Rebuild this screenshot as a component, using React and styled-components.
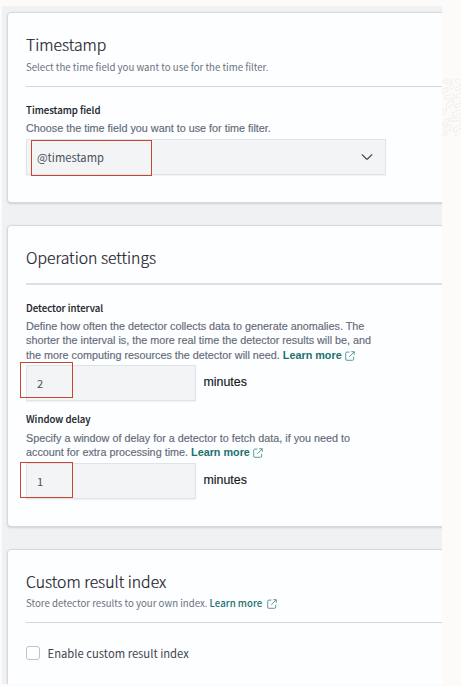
import React from "react";
import styled, { createGlobalStyle } from "styled-components";

const GlobalStyle = createGlobalStyle`
  * { box-sizing: border-box; }
  body { margin: 0; background: #fdfbf9; overflow: hidden; }
`;

const humanist = `"Noto Sans CJK SC", "Open Sans", sans-serif`;
const grotesque = `"Liberation Sans", Arial, sans-serif`;

const Page = styled.main`
  display: flex;
  width: 461px;
  height: 686px;
  padding: 6px 0 2px 2px;
  background: #fdfbf9;
`;

const Content = styled.div`
  display: flex;
  flex-direction: column;
  gap: 22px;
  width: 440px;
  height: 678px;
  padding: 6px 0 0 5px;
  overflow: hidden;
  background: #f0f1f3;
`;

const Margin = styled.aside`
  width: 19px;
  padding-top: 72px;
  svg { display: block; }
`;

const Card = styled.section`
  flex: none;
  width: 450px;
  height: ${(p) => p.$height}px;
  padding: ${(p) => p.$top}px 0 0 18px;
  background: #fdfeff;
  border: 1px solid #d5d8dd;
  border-radius: 4px;
  box-shadow: 0 1px 2px rgba(90, 100, 115, 0.22);
`;

const Title = styled.h2`
  margin: 0;
  font: 300 15.75px/20px ${humanist};
  color: #1c2029;
  -webkit-text-stroke: 0.2px #1c2029;
  white-space: nowrap;
`;

const Subtitle = styled.p`
  margin: ${(p) => p.$gap}px 0 0;
  font: 400 9.67px/14px ${humanist};
  color: #6a717c;
  white-space: nowrap;
`;

const Divider = styled.hr`
  height: ${(p) => p.$weight || 1}px;
  margin: ${(p) => p.$gap}px 0 0;
  border: 0;
  background: ${(p) => (p.$weight ? "#dde0e5" : "#d3d6dc")};
`;

const Label = styled.h3`
  margin: ${(p) => p.$gap}px 0 0;
  font: 500 9.65px/14px ${humanist};
  color: #23262e;
  -webkit-text-stroke: 0.12px #23262e;
  white-space: nowrap;
`;

const Help = styled.p`
  margin: ${(p) => p.$gap}px 0 0;
  font: 400 10.8px/${(p) => p.$line || 14.5}px ${grotesque};
  color: #636a78;
  -webkit-text-stroke: 0.15px #636a78;
  white-space: nowrap;
`;

const Link = styled.a`
  font-weight: ${(p) => p.$weight || 700};
  color: #1b716e;
  -webkit-text-stroke: 0;
  svg { margin-left: ${(p) => p.$space || 3.5}px; vertical-align: -2px; }
`;

const Field = styled.div`
  position: relative;
  display: flex;
  align-items: center;
  justify-content: space-between;
  width: ${(p) => p.$width}px;
  height: 36px;
  padding: 0 12px 0 10px;
  background: #f3f4f6;
  border: 1px solid #e0e3e7;
  box-shadow: 0 1px 1px rgba(100, 110, 130, 0.08);
  font: 400 11.2px/18px ${humanist};
  color: #4a505b;
`;

const Value = styled.span`
  padding-bottom: ${(p) => p.$lift || 0}px;
`;

const Highlight = styled.span`
  position: absolute;
  left: ${(p) => p.$left}px;
  top: ${(p) => p.$top}px;
  width: ${(p) => p.$width}px;
  height: 36px;
  border: 1px solid #c8462f;
`;

const FieldRow = styled.div`
  display: flex;
  align-items: center;
  gap: 7.5px;
  margin-top: ${(p) => p.$gap}px;
`;

const Unit = styled.span`
  padding-bottom: ${(p) => p.$lift}px;
  font: 400 12.4px/16px ${grotesque};
  color: #14171f;
  -webkit-text-stroke: 0.15px #14171f;
`;

const CheckRow = styled.label`
  display: flex;
  align-items: center;
  gap: 7.5px;
  margin-top: 23px;
  font: 400 11.25px/14px ${humanist};
  color: #41464f;
`;

const CheckBox = styled.span`
  width: 14px;
  height: 14px;
  background: #fff;
  border: 1px solid #bfc2c9;
  border-radius: 3px;
`;

const External = () => (
  <svg width="10" height="10" viewBox="0 0 10 10" fill="none" stroke="#4c938d" strokeWidth="0.9">
    <path d="M4.4 1.1H2A1.2 1.2 0 0 0 .7 2.3V8A1.2 1.2 0 0 0 2 9.3H7.4A1.2 1.2 0 0 0 8.7 8V5.8" />
    <path d="M6.2.7H9.3V3.8M9.1.9 4.3 5.8" />
  </svg>
);

const Chevron = () => (
  <svg width="12" height="8" viewBox="0 0 12 8" fill="none" stroke="#3c434f" strokeWidth="1.15">
    <path d="M.8 1.4 5.5 6Q6 6.4 6.5 6L11.2 1.4" />
  </svg>
);

const Pebbles = () => (
  <svg width="19" height="58" viewBox="0 0 19 58" fill="none" stroke="#f0eeee" strokeWidth="1">
    <rect x="1" y="2" width="9" height="3" rx="1.5" />
    <rect x="13" y="1" width="8" height="4" rx="2" transform="rotate(20 15 3)" />
    <rect x="-3" y="11" width="9" height="3.5" rx="1.7" transform="rotate(-30 2 12)" />
    <rect x="8" y="5" width="3" height="6" rx="1.5" transform="rotate(18 9 8)" />
    <rect x="13" y="9" width="8" height="3" rx="1.5" transform="rotate(-24 16 10)" />
    <rect x="3" y="17" width="10" height="4" rx="2" transform="rotate(-8 8 19)" />
    <rect x="14" y="16" width="8" height="4" rx="2" transform="rotate(-28 16 17)" />
    <rect x="4" y="24" width="8" height="4" rx="2" transform="rotate(-38 8 26)" />
    <rect x="13" y="26" width="8" height="3" rx="1.5" transform="rotate(-20 16 27)" />
    <rect x="-1" y="32" width="7" height="3" rx="1.5" transform="rotate(-50 2 34)" />
    <rect x="10" y="33" width="10" height="4" rx="2" transform="rotate(-25 15 35)" />
    <rect x="7" y="40" width="13" height="3" rx="1.5" />
    <rect x="0" y="43" width="8" height="3" rx="1.5" transform="rotate(-55 4 45)" />
    <rect x="1" y="49" width="10" height="3.5" rx="1.7" transform="rotate(-48 6 51)" />
    <rect x="11" y="49" width="10" height="3.5" rx="1.7" transform="rotate(-35 15 51)" />
    <path d="M0 57H5M12 57H15" />
  </svg>
);

export default function App() {
  return (
    <>
      <GlobalStyle />
      <Page>
        <Content>
          <Card $height={191} $top={22}>
            <Title>Timestamp</Title>
            <Subtitle $gap={5}>Select the time field you want to use for the time filter.</Subtitle>
            <Divider $gap={12} />
            <Label $gap={16}>Timestamp field</Label>
            <Help $gap={4}>Choose the time field you want to use for time filter.</Help>
            <FieldRow $gap={3.5}>
              <Field $width={360}>
                <Value $lift={1}>@timestamp</Value>
                <Chevron />
                <Highlight $left={4} $top={0} $width={121} />
              </Field>
            </FieldRow>
          </Card>

          <Card $height={302} $top={21.5}>
            <Title>Operation settings</Title>
            <Divider $gap={15.5} $weight={2} />
            <Label $gap={16}>Detector interval</Label>
            <Help $gap={3.5}>
              Define how often the detector collects data to generate anomalies. The
              <br />
              shorter the interval is, the more real time the detector results will be, and
              <br />
              the more computing resources the detector will need. <Link>Learn more<External /></Link>
            </Help>
            <FieldRow $gap={3}>
              <Field $width={170}>
                <Value>2</Value>
                <Highlight $left={-7} $top={-4} $width={53} />
              </Field>
              <Unit $lift={2}>minutes</Unit>
            </FieldRow>
            <Label $gap={11}>Window delay</Label>
            <Help $gap={5} $line={14}>
              Specify a window of delay for a detector to fetch data, if you need to
              <br />
              account for extra processing time. <Link>Learn more<External /></Link>
            </Help>
            <FieldRow $gap={4}>
              <Field $width={170}>
                <Value>1</Value>
                <Highlight $left={-7} $top={-2} $width={53} />
              </Field>
              <Unit $lift={3}>minutes</Unit>
            </FieldRow>
          </Card>

          <Card $height={191} $top={22}>
            <Title>Custom result index</Title>
            <Subtitle $gap={4}>
              Store detector results to your own index. <Link $weight={500} $space={5}>Learn more<External /></Link>
            </Subtitle>
            <Divider $gap={12} />
            <CheckRow>
              <CheckBox />
              Enable custom result index
            </CheckRow>
          </Card>
        </Content>
        <Margin>
          <Pebbles />
        </Margin>
      </Page>
    </>
  );
}
